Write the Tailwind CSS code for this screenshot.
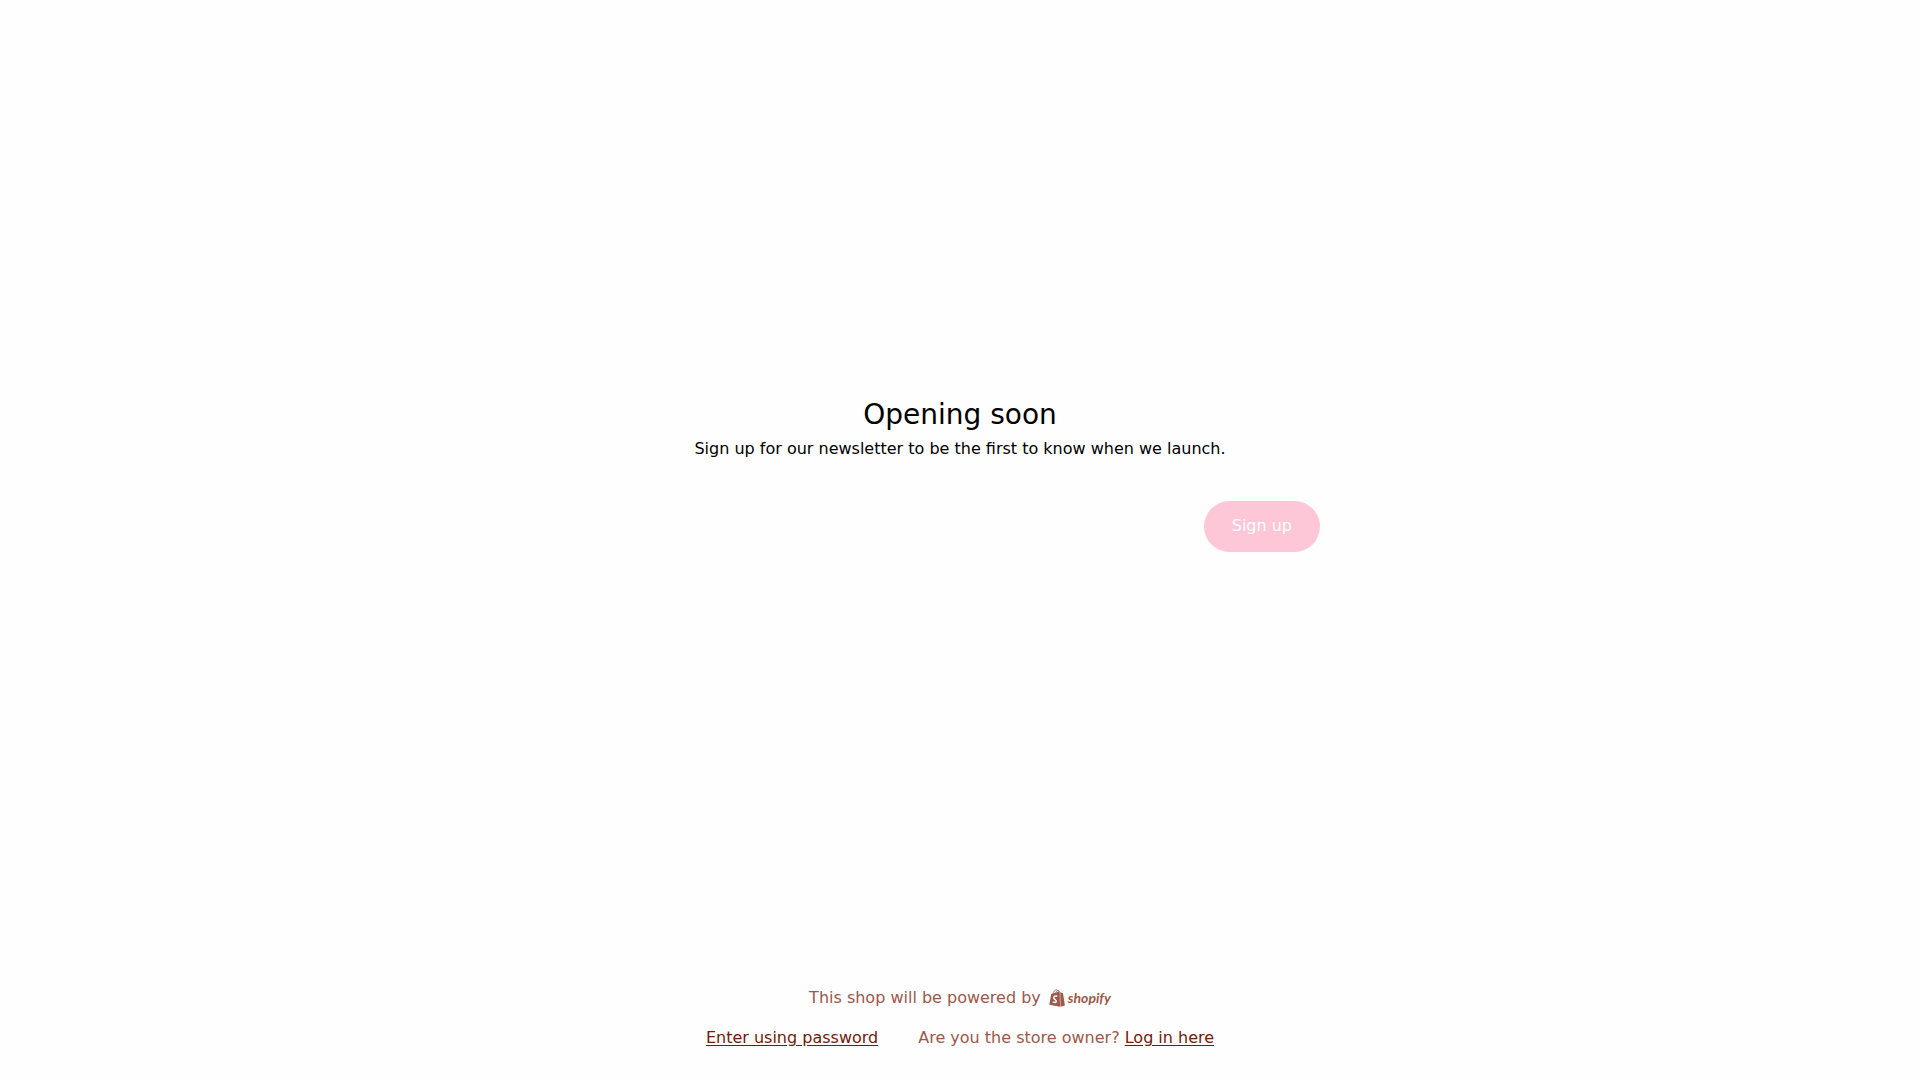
<!DOCTYPE html>
<html lang="en">
<head>
  <meta charset="UTF-8" />
  <meta name="viewport" content="width=device-width, initial-scale=1" />
  <title>Opening soon</title>
  <script src="https://cdn.jsdelivr.net/npm/@tailwindcss/browser@4"></script>
</head>
<body class="min-h-screen flex flex-col bg-[#fefefe] text-black text-[16px] leading-6 font-['DejaVu_Sans',sans-serif]">
  <main class="grow flex flex-col items-center justify-center px-4 pb-[38px]">
    <h1 class="text-[28px] leading-9 text-center">Opening soon</h1>
    <p class="mt-1 text-center">Sign up for our newsletter to be the first to know when we launch.</p>

    <form class="mt-10 w-full max-w-[720px] flex">
      <input type="email" aria-label="Email" class="grow min-w-0 px-4 bg-transparent outline-none" />
      <button type="submit" class="h-[51px] px-7 rounded-full bg-[#fdc7d7] text-[#fefefe]">Sign up</button>
    </form>
  </main>

  <footer class="flex flex-col items-center gap-4 px-4 pb-[30px] text-[#9c584a]">
    <div class="flex items-center gap-2">
      <span>This shop will be powered by</span>
      <a href="#" aria-label="Shopify" class="flex items-center gap-[3px]">
        <svg class="w-4 h-[18px]" viewBox="0 0 16 18" fill="currentColor">
          <path d="M2.2 4.9 10.7 2.6 11 17.8 0.3 15.8Z" />
          <path d="M11.3 2.8 12.2 3.7 13.9 3.9 15.9 16.6 11.4 17.8Z" />
          <path d="M4 5.2C4.3 2.7 5.9.7 7.3.7 8.7.7 9.3 2.1 9.3 4M6.4 4.6C6.7 2.8 7.9 1.4 8.9 1.4 9.9 1.4 10.3 2.3 10.4 3.3" fill="none" stroke="currentColor" stroke-width=".8" />
          <path d="M8.3 7.3C6.5 6.5 4.7 7.2 4.7 8.8 4.7 10.7 7.4 10.7 7.3 12.5 7.2 14 5.1 13.9 3.7 12.7" fill="none" stroke="#fefefe" stroke-width="1.5" />
        </svg>
        <span class="text-[14px] leading-5 font-bold italic font-['Lato',sans-serif]">shopify</span>
      </a>
    </div>
    <div class="flex flex-wrap justify-center gap-x-10 gap-y-2">
      <a href="#" class="text-[#721a0b] underline underline-offset-2">Enter using password</a>
      <p>Are you the store owner? <a href="#" class="text-[#721a0b] underline underline-offset-2">Log in here</a></p>
    </div>
  </footer>
</body>
</html>
